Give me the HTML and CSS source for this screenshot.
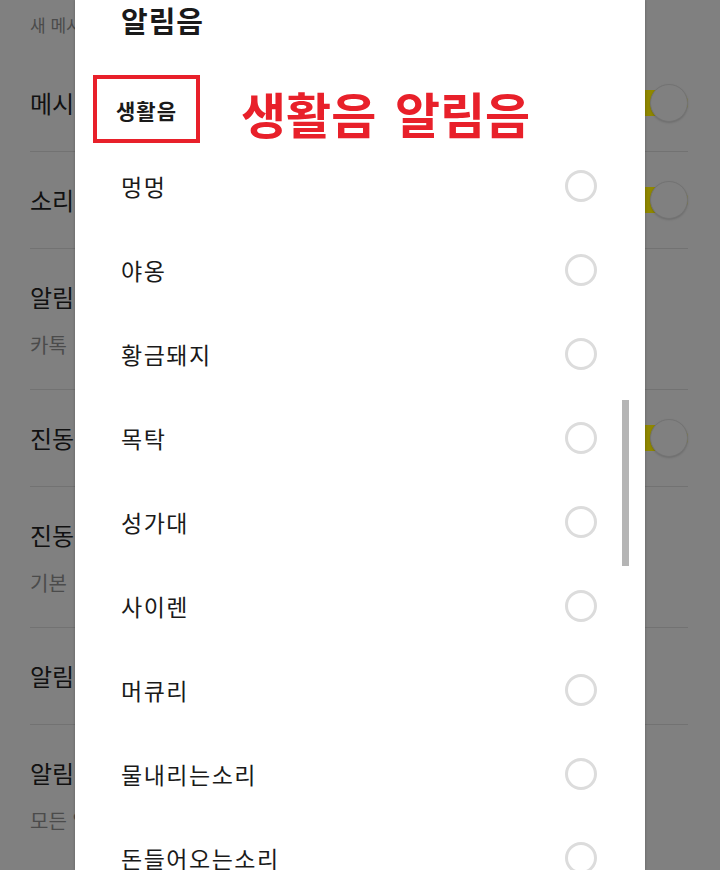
FILE: index.html
```html
<!DOCTYPE html>
<html lang="ko">

<head>
  <meta charset="UTF-8">
  <meta name="viewport" content="width=device-width, initial-scale=1.0">
  <title>알림음 설정</title>
  <link rel="stylesheet" href="styles.css">
</head>

<body>
  <!-- 배경: 알림 설정 화면 (dim 처리) -->
  <div class="settings">
    <div class="section-label">새 메시지 알림</div>

    <div class="row">
      <div class="row-text"><div class="row-title">메시지 알림</div></div>
      <span class="toggle"><span class="thumb"></span></span>
    </div>
    <div class="row">
      <div class="row-text"><div class="row-title">소리</div></div>
      <span class="toggle"><span class="thumb"></span></span>
    </div>
    <div class="row double">
      <div class="row-text">
        <div class="row-title">알림음</div>
        <div class="row-sub">카톡</div>
      </div>
    </div>
    <div class="row">
      <div class="row-text"><div class="row-title">진동</div></div>
      <span class="toggle"><span class="thumb"></span></span>
    </div>
    <div class="row double">
      <div class="row-text">
        <div class="row-title">진동 패턴</div>
        <div class="row-sub">기본</div>
      </div>
    </div>
    <div class="row">
      <div class="row-text"><div class="row-title">알림 센터</div></div>
    </div>
    <div class="row double last">
      <div class="row-text">
        <div class="row-title">알림 표시</div>
        <div class="row-sub">모든 알림</div>
      </div>
    </div>
  </div>

  <!-- 알림음 선택 다이얼로그 -->
  <div class="dialog">
    <h2 class="dialog-title">알림음</h2>

    <div class="group-head">
      <div class="group-box">생활음</div>
      <div class="group-note">생활음 알림음</div>
    </div>

    <ul class="sound-list">
      <li class="sound"><span>멍멍</span><i class="radio"></i></li>
      <li class="sound"><span>야옹</span><i class="radio"></i></li>
      <li class="sound"><span>황금돼지</span><i class="radio"></i></li>
      <li class="sound"><span>목탁</span><i class="radio"></i></li>
      <li class="sound"><span>성가대</span><i class="radio"></i></li>
      <li class="sound"><span>사이렌</span><i class="radio"></i></li>
      <li class="sound"><span>머큐리</span><i class="radio"></i></li>
      <li class="sound"><span>물내리는소리</span><i class="radio"></i></li>
      <li class="sound"><span>돈들어오는소리</span><i class="radio"></i></li>
    </ul>

    <div class="scrollbar"></div>
  </div>
</body>

</html>
```

FILE: styles.css
```css
:root {
  --dim-bg: #808080;
  --dim-line: #727272;
  --dim-sub: #4b4b4b;
  --dim-yellow: #8f8700;
  --red: #e8202a;
  --radio-line: #dcdcdc;
  --font: "Noto Sans CJK KR", "Noto Sans", sans-serif;
}

* {
  box-sizing: border-box;
}

html,
body {
  margin: 0;
  height: 870px;
  overflow: hidden;
}

body {
  position: relative;
  background: var(--dim-bg);
  font-family: var(--font);
  color: #111;
}

/* 배경 설정 목록 */
.settings {
  padding: 0 32px 0 30px;
}

.section-label {
  height: 55px;
  padding-top: 12px;
  font-size: 17px;
  line-height: 26px;
  color: var(--dim-sub);
}

.row {
  display: flex;
  align-items: center;
  justify-content: space-between;
  height: 97px;
  border-bottom: 1px solid var(--dim-line);
}

.row:first-of-type {
  height: 100px;
}

.row.double {
  height: 141px;
  align-items: flex-start;
  padding-top: 30px;
}

.row.last {
  border-bottom: none;
}

.row-title {
  font-size: 24px;
  line-height: 36px;
  white-space: nowrap;
}

.row-sub {
  margin-top: 12px;
  font-size: 20px;
  line-height: 36px;
  color: var(--dim-sub);
  white-space: nowrap;
}

.toggle {
  position: relative;
  width: 58px;
  height: 26px;
  border-radius: 13px;
  background: var(--dim-yellow);
}

.toggle .thumb {
  position: absolute;
  right: 0;
  top: -6px;
  width: 38px;
  height: 38px;
  border-radius: 50%;
  background: var(--dim-bg);
  border: 1px solid #737373;
  box-shadow: 0 1px 2px rgba(0, 0, 0, 0.15);
}

/* 다이얼로그 */
.dialog {
  position: absolute;
  top: 0;
  left: 75px;
  width: 570px;
  height: 870px;
  background: #fff;
  box-shadow: 1px 0 2px rgba(0, 0, 0, 0.12), -1px 0 2px rgba(0, 0, 0, 0.12);
  overflow: hidden;
}

.dialog-title {
  margin: 0;
  padding-left: 46px;
  height: 40px;
  font-size: 29px;
  line-height: 40px;
  font-weight: 700;
  letter-spacing: 1px;
  color: #1a1a1a;
}

.group-head {
  display: flex;
  align-items: center;
  gap: 41px;
  margin: 35px 0 0 18px;
}

.group-box {
  display: flex;
  align-items: center;
  justify-content: center;
  width: 107px;
  height: 68px;
  padding-top: 2px;
  border: 4px solid var(--red);
  font-size: 21px;
  font-weight: 700;
  letter-spacing: 1px;
  color: #1a1a1a;
}

.group-note {
  font-size: 49px;
  font-weight: 700;
  line-height: 1;
  word-spacing: 5px;
  color: var(--red);
  margin-top: 6px;
}

.sound-list {
  list-style: none;
  margin: 1px 0 0;
  padding: 0 48px 0 46px;
}

.sound {
  display: flex;
  align-items: center;
  justify-content: space-between;
  height: 84px;
  font-size: 23px;
  letter-spacing: 1.5px;
  color: #1a1a1a;
}

.radio {
  width: 32px;
  height: 32px;
  border-radius: 50%;
  border: 3px solid var(--radio-line);
}

.scrollbar {
  position: absolute;
  left: 547px;
  top: 400px;
  width: 7px;
  height: 166px;
  background: #b5b5b5;
}
```
